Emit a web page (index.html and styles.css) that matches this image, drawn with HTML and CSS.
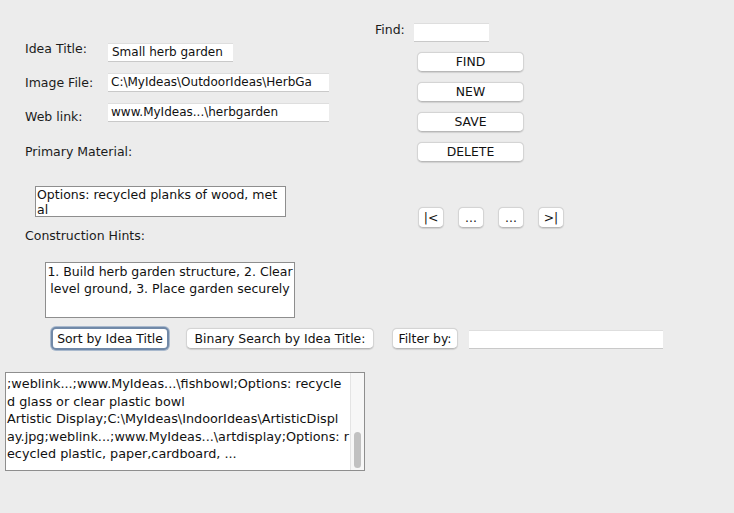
FILE: index.html
```html
<!DOCTYPE html>
<html>
<head>
<meta charset="utf-8">
<link rel="stylesheet" href="styles.css">
</head>
<body>
<div class="window">
  <div class="top">
    <div class="form">
      <div class="row">
        <span class="label lbl-title">Idea Title:</span>
        <div class="field field-title">Small herb garden</div>
      </div>
      <div class="row">
        <span class="label lbl-image">Image File:</span>
        <div class="field field-wide">C:\MyIdeas\OutdoorIdeas\HerbGa</div>
      </div>
      <div class="row">
        <span class="label lbl-web">Web link:</span>
        <div class="field field-wide">www.MyIdeas...\herbgarden</div>
      </div>
      <div class="label lbl-primary">Primary Material:</div>
      <div class="area area-options">Options: recycled planks of wood, met<br>al</div>
      <div class="label lbl-hints">Construction Hints:</div>
      <div class="area area-hints">1. Build herb garden structure, 2. Clear<br>level ground, 3. Place garden securely</div>
    </div>
    <div class="side">
      <div class="find-row">
        <span class="label lbl-find">Find:</span>
        <div class="field field-find"></div>
      </div>
      <div class="actions">
        <button class="btn btn-action">FIND</button>
        <button class="btn btn-action">NEW</button>
        <button class="btn btn-action">SAVE</button>
        <button class="btn btn-action">DELETE</button>
      </div>
      <div class="nav">
        <button class="btn btn-nav">|&lt;</button>
        <button class="btn btn-nav">...</button>
        <button class="btn btn-nav">...</button>
        <button class="btn btn-nav">&gt;|</button>
      </div>
    </div>
  </div>
  <div class="toolbar">
    <button class="btn btn-sort">Sort by Idea Title</button>
    <button class="btn btn-search">Binary Search by Idea Title:</button>
    <button class="btn btn-filter">Filter by:</button>
    <div class="field field-filter"></div>
  </div>
  <div class="output">
    <div class="output-text">;weblink...;www.MyIdeas...\fishbowl;Options: recycle<br>d glass or clear plastic bowl<br>Artistic Display;C:\MyIdeas\IndoorIdeas\ArtisticDispl<br>ay.jpg;weblink...;www.MyIdeas...\artdisplay;Options: r<br>ecycled plastic, paper,cardboard, ...</div>
    <div class="scrollbar"><div class="thumb"></div></div>
  </div>
</div>
</body>
</html>
```
FILE: styles.css
```css
* { box-sizing: border-box; }
html, body {
  margin: 0;
  padding: 0;
  background: #ececec;
}
body {
  font-family: "DejaVu Sans", "Liberation Sans", sans-serif;
  font-size: 12.5px;
  color: #1b1b1b;
}
.window {
  width: 734px;
  height: 513px;
  overflow: hidden;
}
.top {
  display: flex;
  height: 327px;
}
.form {
  width: 375px;
  padding: 43px 0 0 25px;
  display: flex;
  flex-direction: column;
}
.row {
  display: flex;
  align-items: flex-start;
  height: 19px;
  margin-bottom: 11px;
}
.row .label {
  width: 83px;
  flex: none;
}
.label {
  line-height: 15px;
  white-space: nowrap;
}
.lbl-title { margin-top: -2px; }
.lbl-image { margin-top: 2px; }
.lbl-web { margin-top: 6px; }
.lbl-primary { margin-top: 11px; }
.lbl-hints { margin-top: 11px; }
.field {
  background: #fff;
  border-top: 1px solid #dedede;
  border-bottom: 1px solid #c9c9c9;
  height: 19px;
  font-size: 12px;
  line-height: 17px;
  padding-left: 4px;
  white-space: nowrap;
  overflow: hidden;
  color: #111;
}
.field-title { width: 125px; }
.field-wide { width: 221px; padding-left: 3px; }
.area {
  background: #fff;
  border: 1px solid #8e8e8e;
  font-size: 12.5px;
  white-space: nowrap;
  overflow: hidden;
  color: #111;
}
.area-options {
  margin: 27px 0 0 10px;
  width: 251px;
  height: 31px;
  line-height: 15px;
  padding: 0 0 0 1px;
}
.area-hints {
  margin: 19px 0 0 20px;
  width: 250px;
  height: 56px;
  line-height: 17px;
  padding-top: 0;
  text-align: center;
}
.side {
  padding-top: 23px;
  display: flex;
  flex-direction: column;
}
.find-row {
  display: flex;
  align-items: flex-start;
}
.lbl-find {
  width: 39px;
  margin-top: -1px;
}
.field-find { width: 75px; }
.actions {
  margin: 10px 0 0 42px;
  display: flex;
  flex-direction: column;
  gap: 10px;
}
.btn {
  font-family: "DejaVu Sans", "Liberation Sans", sans-serif;
  font-size: 12.4px;
  color: #111;
  background: #fff;
  border: 1px solid #d4d4d4;
  border-bottom-color: #b8b8b8;
  border-radius: 5px;
  padding: 0;
  margin: 0;
  box-shadow: 0 0.5px 1px rgba(0,0,0,0.12);
  white-space: nowrap;
  text-align: center;
}
.btn-action {
  width: 107px;
  height: 20px;
  line-height: 18px;
}
.nav {
  margin: 45px 0 0 43px;
  display: flex;
  gap: 14px;
}
.btn-nav {
  width: 26px;
  height: 21px;
  line-height: 19px;
}
.toolbar {
  display: flex;
  align-items: flex-start;
  height: 45px;
}
.btn-sort {
  margin-left: 51px;
  width: 118px;
  height: 23px;
  line-height: 19px;
  border: 2px solid #7189a8;
  box-shadow: 0 0 0 1px #a9b9cd;
  border-radius: 5px;
}
.btn-search {
  margin: 1px 0 0 17px;
  width: 188px;
  height: 21px;
  line-height: 19px;
}
.btn-filter {
  margin: 1px 0 0 18px;
  width: 66px;
  height: 21px;
  line-height: 19px;
}
.field-filter {
  margin: 3px 0 0 11px;
  width: 194px;
  height: 19px;
}
.output {
  margin-left: 5px;
  width: 360px;
  height: 99px;
  background: #fff;
  border: 1px solid #8e8e8e;
  display: flex;
}
.output-text {
  flex: 1;
  padding: 2px 0 0 1px;
  font-size: 12.8px;
  line-height: 17.5px;
  white-space: nowrap;
  overflow: hidden;
  color: #111;
}
.scrollbar {
  width: 14px;
  background: #f7f7f7;
  border-left: 1px solid #e4e4e4;
  display: flex;
  flex-direction: column;
  justify-content: flex-end;
  padding: 0 3px 2px 3px;
}
.thumb {
  height: 36px;
  background: #c1c1c1;
  border-radius: 4px;
}
```
